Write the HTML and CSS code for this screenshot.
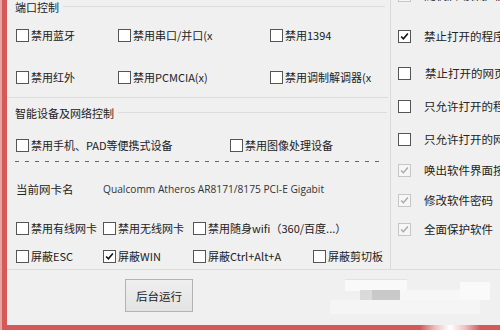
FILE: index.html
```html
<!DOCTYPE html>
<html lang="zh-CN">
<head>
<meta charset="utf-8">
<title>控制面板</title>
<link rel="stylesheet" href="styles.css">
</head>
<body>
<div class="win">
  <div class="frame">
    <div class="main">
      <div class="left">
        <div class="grp g1">
          <div class="legend"><span>端口控制</span><i class="line"></i></div>
          <div class="grid3">
            <label class="cb"><span class="box"></span><span>禁用蓝牙</span></label>
            <label class="cb"><span class="box"></span><span>禁用串口/并口(x</span></label>
            <label class="cb"><span class="box"></span><span>禁用1394</span></label>
            <label class="cb"><span class="box"></span><span>禁用红外</span></label>
            <label class="cb"><span class="box"></span><span>禁用PCMCIA(x)</span></label>
            <label class="cb"><span class="box"></span><span>禁用调制解调器(x</span></label>
          </div>
        </div>
        <div class="grp g2">
          <div class="legend"><span>智能设备及网络控制</span><i class="line"></i></div>
          <div class="grid2">
            <label class="cb"><span class="box"></span><span>禁用手机、PAD等便携式设备</span></label>
            <label class="cb"><span class="box"></span><span>禁用图像处理设备</span></label>
          </div>
          <div class="dash"></div>
          <div class="nic">
            <span class="nic-label">当前网卡名</span>
            <span class="nic-name">Qualcomm Atheros AR8171/8175 PCI-E Gigabit</span>
          </div>
        </div>
        <div class="grid4">
          <label class="cb"><span class="box"></span><span>禁用有线网卡</span></label>
          <label class="cb"><span class="box"></span><span>禁用无线网卡</span></label>
          <label class="cb"><span class="box"></span><span>禁用随身wifi（360/百度...）</span></label>
          <span></span>
          <label class="cb"><span class="box"></span><span>屏蔽ESC</span></label>
          <label class="cb"><span class="box on"><svg viewBox="0 0 13 13" width="11" height="11"><path d="M2.5 6.5 L5.2 9.2 L10.5 3" fill="none" stroke="#111" stroke-width="1.9"/></svg></span><span>屏蔽WIN</span></label>
          <label class="cb"><span class="box"></span><span>屏蔽Ctrl+Alt+A</span></label>
          <label class="cb"><span class="box"></span><span>屏蔽剪切板</span></label>
        </div>
      </div>
      <div class="right">
        <label class="ri r1"><span class="box dis"><svg viewBox="0 0 13 13" width="11" height="11"><path d="M2.5 6.5 L5.2 9.2 L10.5 3" fill="none" stroke="#a8a8a8" stroke-width="1.6"/></svg></span><span>随机启动保护软件</span></label>
        <label class="ri r2"><span class="box"><svg viewBox="0 0 13 13" width="11" height="11"><path d="M2.5 6.5 L5.2 9.2 L10.5 3" fill="none" stroke="#111" stroke-width="1.9"/></svg></span><span>禁止打开的程序</span></label>
        <label class="ri r3"><span class="box"></span><span class="sp">禁止打开的网页</span></label>
        <label class="ri r4"><span class="box"></span><span>只允许打开的程序</span></label>
        <label class="ri r5"><span class="box"></span><span>只允许打开的网页</span></label>
        <label class="ri r6"><span class="box dis"><svg viewBox="0 0 13 13" width="11" height="11"><path d="M2.5 6.5 L5.2 9.2 L10.5 3" fill="none" stroke="#a8a8a8" stroke-width="1.6"/></svg></span><span>唤出软件界面按键</span></label>
        <label class="ri r7"><span class="box dis"><svg viewBox="0 0 13 13" width="11" height="11"><path d="M2.5 6.5 L5.2 9.2 L10.5 3" fill="none" stroke="#a8a8a8" stroke-width="1.6"/></svg></span><span>修改软件密码</span></label>
        <label class="ri r8"><span class="box dis"><svg viewBox="0 0 13 13" width="11" height="11"><path d="M2.5 6.5 L5.2 9.2 L10.5 3" fill="none" stroke="#a8a8a8" stroke-width="1.6"/></svg></span><span>全面保护软件</span></label>
      </div>
    </div>
    <div class="bottom">
      <button class="btn">后台运行</button>
      <div class="mosaic">
        <i class="m m1"></i><i class="m m2"></i><i class="m m3"></i><i class="m m4"></i><i class="m m5"></i><i class="m m6"></i>
      </div>
    </div>
  </div>
  <div class="redbar"></div>
</div>
</body>
</html>
```
FILE: styles.css
```css
html, body {
  margin: 0;
  padding: 0;
}
body {
  width: 500px;
  height: 330px;
  overflow: hidden;
  background: #f0f0f0;
  font-family: "Noto Sans CJK SC", "Noto Sans", sans-serif;
  font-size: 11px;
  color: #222;
}
.win {
  height: 330px;
  display: flex;
  flex-direction: column;
  border-left: 2px solid #e7a3a3;
  box-sizing: border-box;
}
.frame {
  flex: 1;
  display: flex;
  flex-direction: column;
  border-left: 5px solid #d45a5a;
  min-height: 0;
}
.main {
  height: 270px;
  box-sizing: border-box;
  display: flex;
  border-bottom: 1px solid #dcdcdc;
  overflow: hidden;
}
.left {
  width: 383px;
  flex: none;
}
.right {
  flex: 1;
  border-left: 1px solid #dadada;
  overflow: hidden;
  padding-left: 7px;
  white-space: nowrap;
}

/* group boxes */
.legend {
  display: flex;
  align-items: center;
  height: 14px;
  padding-left: 8px;
  line-height: 14px;
}
.legend span {
  flex: none;
}
.line {
  flex: 1;
  border-top: 1px solid #dcdcdc;
  margin: -2px 3px 0 4px;
}
.g1 {
  border-bottom: 1px solid #dcdcdc;
  margin-right: 2px;
  height: 98px;
  box-sizing: border-box;
}
.grid3 {
  display: grid;
  grid-template-columns: 102px 152px 1fr;
  grid-auto-rows: 42px;
  padding-left: 9px;
}
.g2 {
  padding-top: 8px;
}
.grid2 {
  display: grid;
  grid-template-columns: 214px 1fr;
  height: 26px;
  margin-top: 12px;
  padding-left: 9px;
}
.dash {
  height: 1px;
  margin: 3px 8px 0 8px;
  background: repeating-linear-gradient(90deg, #666 0 4px, transparent 4px 10px);
}
.nic {
  display: flex;
  align-items: center;
  height: 20px;
  margin-top: 17px;
  padding-left: 9px;
}
.nic-label {
  width: 87px;
  flex: none;
  font-size: 11.5px;
}
.nic-name {
  font-family: "Open Sans", sans-serif;
  font-size: 10.2px;
  color: #333;
}
.grid4 {
  display: grid;
  grid-template-columns: 87px 90px 120px 1fr;
  grid-auto-rows: 28px;
  margin-top: 15px;
  padding-left: 9px;
}

/* checkboxes */
.cb {
  display: flex;
  align-items: center;
  gap: 2px;
  white-space: nowrap;
}
.box {
  width: 13px;
  height: 13px;
  box-sizing: border-box;
  border: 1px solid #555;
  background: #fff;
  flex: none;
  display: flex;
  align-items: center;
  justify-content: center;
}
.box.dis {
  border-color: #c6c6c6;
  background: #f6f6f6;
}

/* right column items */
.ri {
  display: flex;
  align-items: center;
  gap: 13px;
  height: 20px;
  font-size: 11.5px;
}
.ri .sp {
  padding-left: 1px;
}
.r1 { margin-top: -15px; }
.r2 { margin-top: 21px; }
.r3 { margin-top: 17px; }
.r4 { margin-top: 13px; }
.r5 { margin-top: 13px; }
.r6 { margin-top: 11px; }
.r7 { margin-top: 10px; }
.r8 { margin-top: 9px; }

/* bottom */
.bottom {
  flex: 1;
  position: relative;
  padding: 9px 0 0 118px;
}
.btn {
  width: 68px;
  height: 33px;
  border: 1px solid #b3b3b3;
  background: linear-gradient(#efefef, #e3e3e3);
  font-family: "Noto Sans CJK SC", sans-serif;
  font-size: 11.5px;
  color: #222;
  padding: 0;
}
.mosaic {
  position: absolute;
  left: 323px;
  top: 2px;
  width: 170px;
  height: 52px;
}
.m {
  position: absolute;
  display: block;
}
.m1 { left: 15px; top: 7px; width: 62px; height: 11px; background: #f9f9f9; border-top: 1px solid #e2e2e2; }
.m2 { left: 30px; top: 18px; width: 12px; height: 10px; background: #dadada; }
.m3 { left: 42px; top: 18px; width: 28px; height: 10px; background: #c9c9c9; }
.m4 { left: 70px; top: 18px; width: 60px; height: 10px; background: #f7f7f7; }
.m5 { left: 0; top: 28px; width: 150px; height: 14px; background: #f5f5f5; }
.m6 { left: 130px; top: 10px; width: 30px; height: 18px; background: #fafafa; }

.redbar {
  height: 5px;
  flex: none;
  background: linear-gradient(90deg, #d45a5a 0, #d45a5a 84%, #efc0c0 87%, #fff 90%, #efc0c0 93%, #d45a5a 96%, #d45a5a 100%);
}
```
